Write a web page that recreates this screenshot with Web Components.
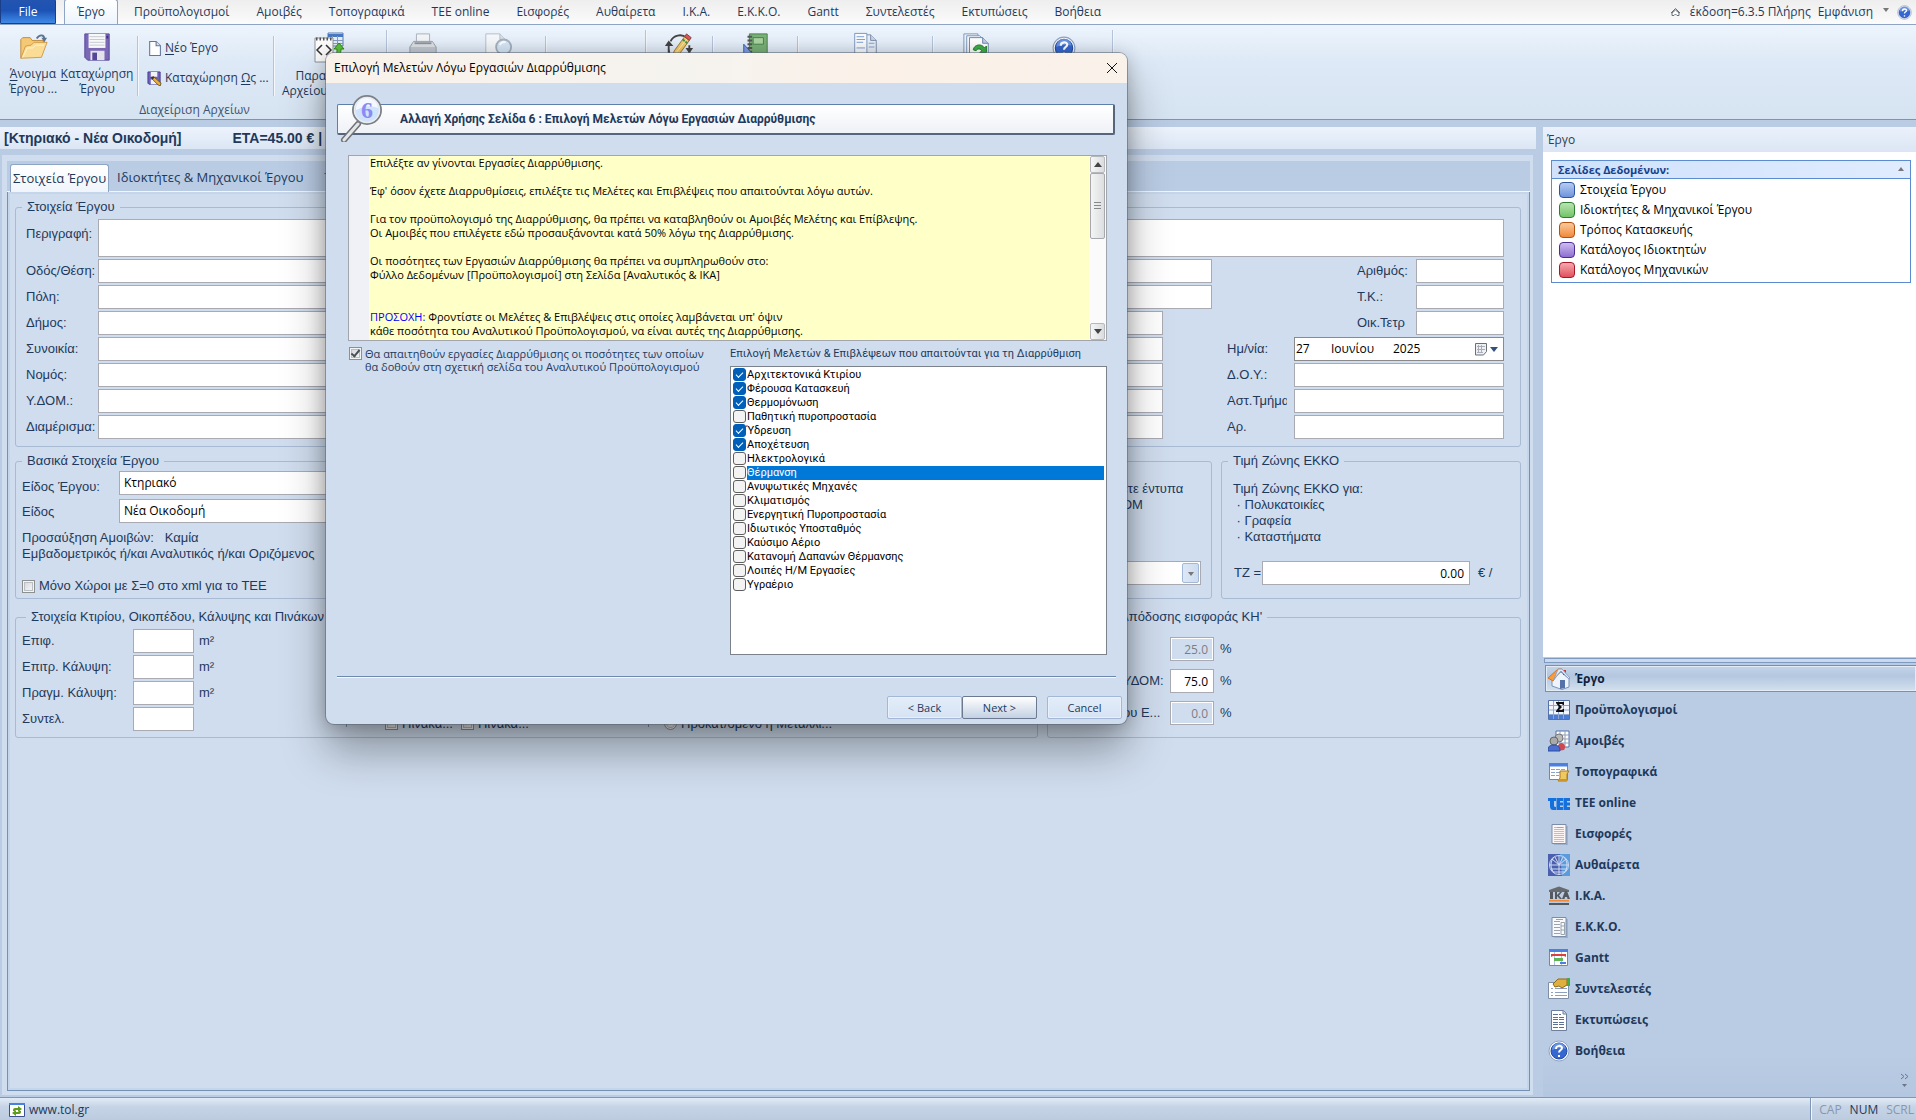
<!DOCTYPE html>
<html lang="el">
<head>
<meta charset="utf-8">
<title>Έργο</title>
<style>
  html, body { height: 100%; margin: 0; }
  body { font: 12px/16px "Open Sans", "Noto Sans", sans-serif; color: #1e395b; background: #bacce4; overflow: hidden; }
</style>
</head>
<body>
<project-app></project-app>
<script>
const BASE = `
  *, *::before, *::after { box-sizing: border-box; }
  :host { display: block; box-sizing: border-box; }
  :host([hidden]) { display: none; }
  button, input, select, textarea { font: inherit; color: inherit; margin: 0; }
  button { background: none; border: 0; padding: 0; }
  a { color: inherit; text-decoration: none; }
  ul { list-style: none; margin: 0; padding: 0; }
  p { margin: 0; }
  .form { font: 13px/16px "Liberation Sans", Arial, sans-serif; }
  .box { height: 24px; border: 1px solid #a9aab2; background: #fff; color: #000; padding: 0 4px; border-radius: 0; outline: 0; font: 12px/16px "Open Sans", sans-serif; min-width: 0; }
  .tick { appearance: none; width: 13px; height: 13px; border: 1px solid #8e8f8f; background: linear-gradient(135deg, #cfd3d8, #fbfbfb); box-shadow: inset 0 0 0 1px #f4f4f4, inset 0 0 0 2px #b9bec5; flex: none; display: grid; place-items: center; }
  .tick:checked::after { content: ""; width: 5px; height: 9px; border: solid #4b5159; border-width: 0 2px 2px 0; transform: translateY(-1px) rotate(40deg); }
`;
function define(name, css, html, setup) {
  const t = document.createElement('template');
  customElements.define(name, class extends HTMLElement {
    connectedCallback() {
      if (this.shadowRoot) return;
      const root = this.attachShadow({ mode: 'open' });
      t.innerHTML = `<style>${BASE}${css}</style>` + (typeof html === 'function' ? html(this) : html);
      root.append(t.content.cloneNode(true));
      if (setup) setup(this, root);
    }
  });
}

const page = (fill, lines) => `<path d="M4 1.500h14v19H4z" fill="${fill}" stroke="#7b8da8"/><path d="M19 3v19H6" fill="none" stroke="#64789a" opacity=".6"/>${lines}`;
const ICONS = {
  folder: [32, `<path d="M3 28V8l2-2h8l2 3h12v5" fill="#f5c873" stroke="#c08a3a"/><path d="M3 28L8 15l6-1 3-3h14l-6 16z" fill="#fbdc94" stroke="#cf9a45"/><path d="M5 27l5-10h6l3-3h9" fill="none" stroke="#fff3cf"/><path d="M20 7c3-5 8-4 8 0" fill="none" stroke="#5b748f" stroke-width="2"/><path d="M25 6h6l-3 5z" fill="#5b748f"/>`],
  save: [32, `<path d="M3 2h26v28H6l-3-3z" fill="#7a68b5" stroke="#56459a"/><path d="M7 2h18v15H7z" fill="#f7f8fa"/><path d="M8 5h16M8 8h16M8 11h16M8 14h16" stroke="#c2c7cf"/><path d="M9 20h15v10H9z" fill="#e3e4ea"/><path d="M11 22h5v8h-5z" fill="#56459a"/><path d="M26 4h2v3h-2z" fill="#3e2f7c"/>`],
  xml: [32, `<path d="M14 1h15v13H14z" fill="#e8eef8" stroke="#5a7db4"/><path d="M14 2h15v3H14z" fill="#4878c0"/><path d="M14 8.500h15M14 11.500h15M18.500 4v10M23.500 4v10" stroke="#7f9bc7"/><path d="M1 6h18v24H1z" fill="#fcfcfc" stroke="#8e9296"/><path d="M2 7h17" stroke="#555" stroke-width="3" stroke-dasharray="1.500 2"/><path d="M8 13l-5 5 5 5M12 13l5 5-5 5" fill="none" stroke="#333" stroke-width="1.500"/><path d="M25 11l5 6h-3c0 5-2 7-6 7 2-2 2-4 2-7h-3z" fill="#5fc437" stroke="#2f8a1e"/>`],
  printer: [32, `<path d="M9 2h14v10H9z" fill="#f2f4f6" stroke="#a8b0ba"/><path d="M2 16l4-6h20l4 6v14H2z" fill="#c3cad3" stroke="#97a0ab"/><path d="M6 11h20l3 5H3z" fill="#dfe3e8"/><path d="M7 12h18" stroke="#8c949e" stroke-width="2"/>`],
  preview: [32, `<path d="M3 2h15l6 6v24H3z" fill="#f5f8fb" stroke="#b3bdca"/><path d="M18 2v6h6" fill="#d8e0ea" stroke="#b3bdca"/><circle cx="22" cy="16" r="8" fill="#d8e8f8" stroke="#a5b1bf" stroke-width="2"/><path d="M18 14c1-3 4-4 6-3" fill="none" stroke="#fff" stroke-width="2"/>`],
  pencil: [32, `<path d="M7 10a11 11 0 0 1 17-4M5 13v9M27 14v9M5 18c0 6 4 10 10 11" fill="none" stroke="#444" stroke-width="2"/><path d="M1 15h9l-5-6zM23 17h8l-4 6z" fill="#444"/><path d="M8 28l3-8L22 5l5 4-11 15z" fill="#f3ca6a" stroke="#9a7427"/><path d="M22 5l2-3 5 4-2 3z" fill="#e0525a" stroke="#7b4640"/><path d="M20 8l5 4" stroke="#47924a" stroke-width="2"/><path d="M13 22L24 8" stroke="#fff0b4"/>`],
  notebook: [32, `<path d="M10 2h19v30H10z" fill="#79b176" stroke="#4a7f4c"/><path d="M14 6h11v7H14z" fill="#a9d3a2" stroke="#4a7f4c"/><path d="M8 5h5M8 9h5M8 13h5M8 17h5M8 21h5" stroke="#555" stroke-width="2"/><path d="M4 13v19h17z" fill="#7f9ee8" stroke="#3857b8"/><path d="M7 22v6h5z" fill="#dce6ff"/>`],
  docs: [32, `<path d="M9 3h13l6 6v23H9z" fill="#e8eef6" stroke="#7b8da8"/><path d="M22 3v6h6" fill="#c6d4e8" stroke="#7b8da8"/><path d="M5 1.500h13v30H5z" fill="#f9fbfd" stroke="#7b96bb"/><path d="M7 5h8M7 8h9M7 11h7M7 17h9M20 12h6M20 16h6" stroke="#7b9dd6"/>`],
  refreshdocs: [32, `<path d="M2 2h15v30H2z" fill="#eef3f9" stroke="#7b96bb"/><path d="M5 4h14l4 4v24H5z" fill="#f4f7fb" stroke="#7b96bb"/><path d="M8 6h14l6 6v20H8z" fill="#fff" stroke="#6b86ac"/><path d="M22 6v6h6" fill="#bfd0e8" stroke="#6b86ac"/><path d="M12 19c1-6 9-7 12-2l2-2v7h-7l2-2c-2-3-5-2-6 0z" fill="#41ae4a" stroke="#197a2a"/>`],
  help: [22, `<circle cx="11" cy="11" r="10" fill="#fff" stroke="#8ea3c4"/><circle cx="11" cy="11" r="8" fill="#3666cf" stroke="#214aa5"/><path d="M4 10a7 7 0 0 1 14-1c-5-2-9-1-14 1z" fill="#8eb0f2" opacity=".6"/><path d="M8 9c0-4 6-4 6-1 0 2-3 2-3 4.500" fill="none" stroke="#fff" stroke-width="2"/><path d="M10 15h2v2h-2z" fill="#fff"/>`],
  newdoc: [14, `<path d="M2.500.5h6l4 4v9h-10z" fill="#fff" stroke="#63779a"/><path d="M8.500.5v4h4" fill="#d6e2f2" stroke="#63779a"/>`],
  saveas: [16, `<path d="M1 1h13v13H2L1 13z" fill="#6d63b8" stroke="#443a90"/><path d="M4 1h7v5H4zM4 9h7v5H4z" fill="#f0f2f8"/><path d="M4 7l3-1 8 7-1 3-2-1z" fill="#e8b040" stroke="#765319"/><path d="M4 7l3-1 1 1-2 2z" fill="#333"/>`],
  home: [22, `<path d="M4 11L13 4l8 7v8l-7 2.500L4 18z" fill="#eef4fc" stroke="#7d93b5"/><path d="M15 2h3v5h-3z" fill="#c43d32"/><path d="M0 10L10 1h4l-9 12z" fill="#f99d3c" stroke="#d9751c"/><path d="M10 1h4l8 9-1 1-8-8-7 8z" fill="#dfe9f7" stroke="#8ca2c4"/><path d="M12 12h5v8l-5 1z" fill="#5572ab"/>`],
  sum: [22, `<path d="M.5 1.500h21v19H.5z" fill="#f3f7fd" stroke="#5572a8"/><path d="M1 15h20v5H1z" fill="#4b7bd2"/><path d="M1 6.500h20M1 11h20M1 15.500h20M5.500 2v18M10.500 2v18M15.500 2v18" stroke="#8fa9d4"/><path d="M8 3h8v3h-1l-1-1h-3l3 3-3 3h3l1-1h1v3H8v-1l3-4-3-4z" fill="#111"/>`],
  people: [22, `<path d="M8 1h13v16H8z" fill="#fff" stroke="#5572a8"/><path d="M8 5h13M8 9h13M8 13h13M12 1v16M17 1v16" stroke="#8fa0ba"/><path d="M9 21c0-6 2-8 5-8 3 1 4 4 2 7z" fill="#d0474f"/><circle cx="11" cy="8" r="4" fill="#b9b9b9" stroke="#777"/><circle cx="6" cy="11" r="4" fill="#a9a9a9" stroke="#666"/><path d="M0 21c0-5 2-6 6-6s6 2 6 6z" fill="#4a6fd0" stroke="#2c4da0"/>`],
  topo: [22, `<path d="M1.500 2.500h18v16h-18z" fill="#fff" stroke="#6d88b5"/><path d="M1 2h19v3.500H1z" fill="#4b7fe0"/><path d="M3 8.500h14M3 11.500h14M3 14.500h8" stroke="#8fa3c8" stroke-dasharray="4 1"/><path d="M12 10h9l-2 3v7h-9l2-3z" fill="#f0c860" stroke="#a97a20"/><path d="M10 18h9v2h-8z" fill="#c9952f"/>`],
  tee: [22, `<path d="M0 6h8v3H6v5q0 1 2 1v3H5q-3 0-3-4V9H0z" fill="#1470dc"/><path d="M8.500 6H15v3h-3v1.500h3v3h-3V15h3v3H8.500zM15.500 6H22v3h-3v1.500h3v3h-3V15h3v3h-6.500z" fill="#1470dc"/>`],
  pink: [22, page('#fdf4f4', '<path d="M6 4.500h10M6 6.500h10M6 8.500h10M6 10.500h10M6 12.500h10M6 14.500h10M6 16.500h10M6 18.500h10" stroke="#f2a9ac"/><path d="M9 4.500h6" stroke="#8fa3e0"/>')],
  globe: [22, `<path d="M0 0h22v22H0z" fill="#4b5fae"/><path d="M12 0h10v22h-8z" fill="#5b9bdc"/><circle cx="11" cy="11" r="9.500" fill="none" stroke="#cfdcf5"/><path d="M11 2v19M2 11h18M11 11L4 5M11 11l7-6M11 11L7 3M11 11l4-8M3 15h16M5 18h12M6 3c-4 5-4 11 0 16M16 3c4 5 4 11 0 16" fill="none" stroke="#cfdcf5"/>`],
  ika: [22, `<path d="M1 5l10-3.500L21 5v2H1z" fill="#676b70"/><path d="M2 7h3v7H2zM7 7h2v3l3-3h2l-3 3.500 3 3.500h-2l-3-3v3H7zM17 6h2l3 8h-2.500l-.5-2h-2l-.5 2H14z" fill="#55595e"/><path d="M1 15h20v1.500H1z" fill="#f08a3a"/><path d="M1 18h20v2H1z" fill="#55595e"/>`],
  ekko: [22, page('#f8f9fa', '<path d="M6 5.500h6M6 8.500h6M6 11.500h6M6 14.500h6M6 17.500h6M8 3.500h7" stroke="#9aa3af"/><path d="M13 6.500h3.500v12H13zM13 10h3M13 14h3" fill="none" stroke="#9aa3af"/>')],
  gantt: [22, `<path d="M1.500 2.500h18v16h-18z" fill="#fff" stroke="#6d88b5"/><path d="M1 2h19v3H1z" fill="#4b7fe0"/><path d="M6.500 5v13M13.500 5v13" stroke="#b0c2e0"/><path d="M3 7h15v3l-2-1H5l-2 1z" fill="#d8433e"/><path d="M6 11h9v3H6z" fill="#62b35a"/><path d="M12 15h6v2h-6z" fill="#4b7fe0"/>`],
  coef: [22, `<path d="M.5 4.500h20v16H.5z" fill="#fff" stroke="#7f8fa8"/><path d="M3 10.500h2M3 14.500h2M3 17.500h2M7 10.500h12M7 14.500h12M7 17.500h12" stroke="#8e9fc0"/><path d="M5 6l5-5h9v6l-5 3-3-2-4 1z" fill="#dfb13c" stroke="#8d6a19"/><path d="M19 0h3v8h-3z" fill="#3fae48"/>`],
  print: [22, `<path d="M3.500 1.500h12l3 3v17h-15z" fill="#fff" stroke="#6d7f9c"/><path d="M15 1.500v3.500h3.500" fill="#cbd7e8" stroke="#6d7f9c"/><path d="M5 5.500h8M5 8.500h12M5 10.500h12M5 13.500h12M5 15.500h12M5 18.500h12" stroke="#5c7295" stroke-dasharray="5 1"/>`],
  web: [16, `<path d="M.5 1.500h15v13H.5z" fill="#fff" stroke="#3d4f8c"/><path d="M0 1h16v2H0z" fill="#4b7fe0"/><path d="M4 9V8q0-2 2-2h3V4l4 3-4 3V8H6v1zM12 9v1q0 2-2 2H7v2l-4-3 4-3v2h3V9z" fill="#5f9a1a"/>`],
  lens: [48, `<path d="M19 30L5 46" stroke="#6f7378" stroke-width="6" stroke-linecap="round"/><path d="M19 30L5 46" stroke="#e4e6e8" stroke-width="3" stroke-linecap="round"/><circle cx="28" cy="16" r="14" fill="#cfe3fb" stroke="#7d8187" stroke-width="2"/><circle cx="28" cy="16" r="12.500" fill="none" stroke="#e9ebee" stroke-width="1.500"/><path d="M17 16a11 11 0 0 1 22-2c-8-3-14-2-22 2z" fill="#f3f9ff"/>`],
};
define('app-icon', `:host{display:inline-block;flex:none;width:var(--s);height:var(--s)} svg{display:block;width:100%;height:100%}`,
  el => { const [v, d] = ICONS[el.getAttribute('name')]; return `<svg viewBox="0 0 ${v} ${v}" aria-hidden="true">${d}</svg>`; },
  el => el.style.setProperty('--s', (el.getAttribute('size') || 22) + 'px'));

/* ---------- Ribbon ---------- */
define('ribbon-tool', `
  :host{width:var(--w);text-align:center;color:#1e395b}
  button{display:flex;flex-direction:column;align-items:center;width:100%;white-space:nowrap;line-height:15px;gap:4px}`,
  `<button type="button"><slot name="icon"></slot><span><slot></slot></span></button>`,
  el => el.style.setProperty('--w', el.getAttribute('w') + 'px'));

define('ribbon-tabs', `
  :host{height:25px;background:linear-gradient(#eee,#fbfbfb);border-bottom:1px solid #8ea4c4;display:flex;align-items:flex-end}
  nav{display:flex;align-items:stretch;height:25px;flex:1;min-width:0}
  nav a{display:flex;align-items:center;padding:0 13px 0 14px;line-height:16px;white-space:nowrap}
  nav .file{width:56px;justify-content:center;padding:0;color:#fff;background:linear-gradient(#2354b0,#1c52b4 45%,#3f8be8);border:1px solid #1b3f87;border-radius:0 2px 0 0;margin-right:8px}
  nav .on{width:54px;padding:0;justify-content:center;background:linear-gradient(#fff,#edf4fd);border:1px solid #8ea4c4;border-bottom:0;border-radius:3px 3px 0 0;margin-right:2px}
  .right{display:flex;align-items:center;gap:7px;height:24px;padding:0 4px 0 0}
  .right svg{margin-right:2px}
  .caret{border:3px solid transparent;border-top:4px solid #777;border-bottom:0;margin:0 1px 4px 3px}`,
  `<nav><a class="file" href="#">File</a><a class="on" href="#">Έργο</a>${['Προϋπολογισμοί','Αμοιβές','Τοπογραφικά','ΤΕΕ online','Εισφορές','Αυθαίρετα','Ι.Κ.Α.','Ε.Κ.Κ.Ο.','Gantt','Συντελεστές','Εκτυπώσεις','Βοήθεια'].map(t => `<a href="#">${t}</a>`).join('')}</nav>
  <div class="right"><svg width="11" height="10" viewBox="0 0 11 10" aria-hidden="true"><path d="M1 6l4.500-4.500L10 6M2 8.500V6l3.500-3L9 6v2.500H7L5.500 7 4 8.500z" fill="#fff" stroke="#68707c"/></svg><span>έκδοση=6.3.5 Πλήρης</span><a href="#">Εμφάνιση</a><i class="caret"></i><app-icon name="help" size="15"></app-icon></div>`);

define('app-ribbon', `
  .body{height:95px;display:flex;background:linear-gradient(#edf4fd,#dde9f6 40%,#d6e3f1);border-bottom:1px solid #7d93b3;padding:5px 0 0 3px}
  .sep{width:1px;height:60px;margin-top:6px;background:#b5c4d9;box-shadow:1px 0 #f4f8fd;flex:none}
  .end{height:80px;margin-top:0}
  .group{display:flex;flex-direction:column;width:383px;flex:none}
  .row{display:flex;height:72px;flex:none}
  .caption{text-align:center;color:#42536e}
  .col{display:flex;flex-direction:column;gap:14px;padding:10px 0 0 9px;width:135px}
  .col button{display:flex;align-items:center;gap:3px;white-space:nowrap;height:16px}
  .gap{flex:none}
  u{text-underline-offset:2px}
  ribbon-tool{flex:none;padding-top:2px}
  .wide{display:block;width:96px;padding-right:52px;text-align:right}
  .low{padding-top:6px}`,
  `<ribbon-tabs></ribbon-tabs>
  <div class="body">
    <div class="group"><div class="row">
      <ribbon-tool w="60"><app-icon slot="icon" name="folder" size="30"></app-icon><u>Ά</u>νοιγμα<br>Έργου ...</ribbon-tool>
      <ribbon-tool w="68"><app-icon slot="icon" name="save" size="30"></app-icon><u>Κ</u>αταχώρηση<br>Έργου</ribbon-tool>
      <i class="gap" style="width:6px"></i><i class="sep"></i>
      <div class="col"><button type="button"><app-icon name="newdoc" size="15"></app-icon><span><u>Ν</u>έο Έργο</span></button><button type="button"><app-icon name="saveas" size="15"></app-icon><span>Καταχώρηση <u>Ω</u>ς ...</span></button></div>
      <i class="sep"></i>
      <ribbon-tool w="112"><app-icon slot="icon" name="xml" size="32"></app-icon><span class="wide">Παρα<br>Αρχείου</span></ribbon-tool>
    </div><div class="caption">Διαχείριση Αρχείων</div></div>
    <i class="sep end"></i>
    <ribbon-tool w="72"><app-icon slot="icon" name="printer" size="30"></app-icon></ribbon-tool>
    <ribbon-tool w="78"><app-icon slot="icon" name="preview" size="30"></app-icon></ribbon-tool>
    <i class="gap" style="width:8px"></i><i class="sep"></i><i class="gap" style="width:99px"></i><i class="sep end"></i>
    <ribbon-tool w="66"><app-icon slot="icon" name="pencil" size="30"></app-icon></ribbon-tool><i class="sep"></i>
    <ribbon-tool w="84"><app-icon slot="icon" name="notebook" size="30"></app-icon></ribbon-tool><i class="sep"></i>
    <ribbon-tool w="134"><app-icon slot="icon" name="docs" size="30"></app-icon></ribbon-tool><i class="sep"></i>
    <ribbon-tool w="88"><app-icon slot="icon" name="refreshdocs" size="30"></app-icon></ribbon-tool>
    <ribbon-tool class="low" w="86"><app-icon slot="icon" name="help" size="24"></app-icon></ribbon-tool>
    <i class="gap" style="width:5px"></i><i class="sep end"></i>
  </div>`);

/* ---------- Form pieces ---------- */
define('group-box', `
  fieldset{border:1px solid #a9bad3;border-radius:3px;margin:0;min-width:0;height:100%;padding:var(--pad,4px 16px 6px 6px)}
  legend{padding:0 5px;margin-left:var(--in,0px);height:16px;white-space:nowrap}`,
  el => `<fieldset class="form"><legend>${el.getAttribute('legend')}</legend><slot></slot></fieldset>`);

define('form-field', `
  :host{display:flex;align-items:center;min-width:0;flex:var(--flex,1)}
  label{width:var(--lw,72px);margin-right:var(--lg,0px);flex:none;white-space:nowrap;overflow:hidden}
  .box{flex:1;width:0}
  .big{height:38px;resize:none;display:block}
  :host([tall]){align-items:flex-start} :host([tall]) label{padding-top:7px}
  .num{text-align:right;padding-right:5px}
  .num:disabled{background:#d0ddee;color:#7d7d84;box-shadow:inset 0 0 0 1px #fff}
  .unit{margin-left:var(--ug,6px);width:var(--uw,12px);white-space:nowrap}`,
  el => { const a = n => el.getAttribute(n) || '';
    return `<label class="form" for="f">${a('label')}</label>${el.hasAttribute('tall') ? '<textarea id="f" class="box big"></textarea>' : `<input id="f" type="text" class="box ${a('value') ? 'num' : ''}" value="${a('value')}" ${el.hasAttribute('off') ? 'disabled' : ''}>`}${a('unit') ? `<span class="form unit">${a('unit')}</span>` : ''}`; });

define('date-field', `
  :host{display:flex;align-items:center;flex:none}
  label{width:67px}
  .wrap{display:flex;flex:1;align-items:center;padding:0 5px 0 1px;border-color:#8a8a8a}
  input{border:0;background:none;padding:0;outline:0}
  button{display:flex;align-items:center;gap:3px;margin-left:auto}`,
  `<label class="form" for="d">Ημ/νία:</label><div class="box wrap"><input id="d" style="width:35px" value="27"><input aria-label="Μήνας" style="width:62px" value="Ιουνίου"><input aria-label="Έτος" style="width:36px" value="2025"><button type="button" aria-label="Ημερολόγιο"><svg width="12" height="13" viewBox="0 0 12 13"><path d="M.5.5h11v8l-3 3.500h-8z" fill="#eef0f4" stroke="#6b6f76"/><path d="M2 3.500h8M2 6.500h8M2 9.500h6M3.500 2v8M6.500 2v8" stroke="#a9aeb8"/></svg><svg width="8" height="5" viewBox="0 0 8 5"><path d="M0 0h8L4 5z" fill="#31507c"/></svg></button></div>`);

define('project-form', `
  :host{display:flex;flex-direction:column;padding:7px 8px 0 7px;gap:6px}
  .g1{--pad:4px 16px 7px 10px;--in:-4px} .g1 .r+.r{margin-top:2px}
  .r{display:flex}
  .a{gap:145px} .b{gap:194px} .c{gap:64px}
  .s{--flex:none;--lw:59px;width:147px} .m{--flex:none;width:277px;--lw:60px;--lg:7px}
  .two{display:flex;gap:9px} .three{display:flex;gap:9px;margin-top:4px}
  .grow{flex:1;min-width:0}
  .g2{--pad:2px 10px 4px 6px} .g3{width:300px;--pad:12px 6px 0 11px;--in:-5px}
  .split{display:flex;justify-content:space-between}
  .pick{display:flex;align-items:center;height:24px} .pick+.pick{margin-top:4px} .pick label{width:97px;padding-top:8px} .pick+.pick label{padding-top:2px}
  select{appearance:none;width:480px}
  .lines{padding-top:7px;white-space:pre;height:39px}
  .check{display:flex;align-items:center;gap:4px;margin-top:16px}
  .rt{padding-top:10px;width:79px;white-space:pre;height:114px;display:flex;flex-direction:column;justify-content:space-between}
  .combo{margin-left:-200px;display:flex;position:relative} .combo select{width:279px}
  .combo::after{content:"";position:absolute;right:2px;top:2px;width:17px;height:20px;border:1px solid #a3b8d6;border-radius:2px;background:linear-gradient(90deg,#dce8f6,#cddcf0);pointer-events:none}
  .combo::before{content:"";position:absolute;right:7px;top:11px;border:3px solid transparent;border-top:4px solid #777;border-bottom:0;z-index:1}
  .tz{--lw:28px;--ug:8px;--uw:18px;margin-top:16px;margin-left:1px;width:262px}
  .tz-note{white-space:pre}
  .g4{--pad:4px 6px 6px 6px;--in:4px} .stack{display:flex;flex-direction:column;gap:2px}
  .k{--lw:111px;--flex:none;width:193px;--ug:5px;--uw:16px}
  .k.short{width:172px}
  .g4 .cols{display:flex;height:102px}
  .left{width:324px}
  .mid,.rad{height:98px;border-left:1px solid #7f94b4;display:flex;align-items:flex-end;white-space:nowrap}
  .mid{width:302px;padding-left:38px;gap:8px} .rad{padding-left:15px}
  .o{display:flex;align-items:center;gap:4px;height:17px;margin-bottom:-5px}
  .o input[type=radio]{border-radius:50%}
  .g5{width:474px;--pad:12px 6px 6px 6px;--in:61px}
  .g5 .stack{gap:8px;padding-left:69px} .p{--lw:47px;--flex:none;width:109px;--ug:6px}
  `,
  `<group-box class="g1" legend="Στοιχεία Έργου">
     <div class="r"><form-field tall label="Περιγραφή:"></form-field></div>
     <div class="r a"><form-field label="Οδός/Θέση:"></form-field><form-field class="s" label="Αριθμός:"></form-field></div>
     <div class="r a"><form-field label="Πόλη:"></form-field><form-field class="s" label="Τ.Κ.:"></form-field></div>
     <div class="r b"><form-field label="Δήμος:"></form-field><form-field class="s" label="Οικ.Τετρ"></form-field></div>
     <div class="r c"><form-field label="Συνοικία:"></form-field><date-field class="m"></date-field></div>
     <div class="r c"><form-field label="Νομός:"></form-field><form-field class="m" label="Δ.Ο.Υ.:"></form-field></div>
     <div class="r c"><form-field label="Υ.ΔΟΜ.:"></form-field><form-field class="m" label="Αστ.Τμήμα"></form-field></div>
     <div class="r c"><form-field label="Διαμέρισμα:"></form-field><form-field class="m" label="Αρ."></form-field></div>
   </group-box>
   <div class="two">
     <group-box class="g2 grow" legend="Βασικά Στοιχεία Έργου"><div class="split"><div>
       <div class="pick"><label for="k1">Είδος Έργου:</label><select id="k1" class="box"><option>Κτηριακό</option></select></div>
       <div class="pick"><label for="k2">Είδος</label><select id="k2" class="box"><option>Νέα Οικοδομή</option></select></div>
       <p class="lines">Προσαύξηση Αμοιβών:   Καμία
Εμβαδομετρικός ή/και Αναλυτικός ή/και Οριζόμενος</p>
       <label class="check"><input type="checkbox" class="tick">Μόνο Χώροι με Σ=0 στο xml για το ΤΕΕ</label></div>
       <div class="rt"><p>ετε έντυπα
ΟΜ</p><div class="combo"><select class="box" aria-label="Έντυπα"><option></option></select></div></div></div>
     </group-box>
     <group-box class="g3" legend="Τιμή Ζώνης ΕΚΚΟ"><div class="tz-note">Τιμή Ζώνης ΕΚΚΟ για:
 · Πολυκατοικίες
 · Γραφεία
 · Καταστήματα</div><form-field class="tz" label="ΤΖ =" value="0.00" unit="€ /"></form-field></group-box>
   </div>
   <div class="three">
     <group-box class="g4 grow" legend="Στοιχεία Κτιρίου, Οικοπέδου, Κάλυψης και Πινάκων"><div class="cols">
       <div class="left stack"><form-field class="k" label="Επιφ." unit="m²"></form-field><form-field class="k" label="Επιτρ. Κάλυψη:" unit="m²"></form-field><form-field class="k" label="Πραγμ. Κάλυψη:" unit="m²"></form-field><form-field class="k short" label="Συντελ."></form-field></div>
       <div class="mid"><label class="o"><input type="checkbox" class="tick">Πίνακα...</label><label class="o"><input type="checkbox" class="tick">Πίνακα...</label></div>
       <div class="rad"><label class="o"><input type="radio" class="tick">Προκατ/όμενο ή Μεταλλι...</label></div>
     </div></group-box>
     <group-box class="g5" legend="Απόδοσης εισφοράς ΚΗ'"><div class="stack"><form-field class="p" off value="25.0" unit="%"></form-field><form-field class="p" label="ΥΔΟΜ:" value="75.0" unit="%"></form-field><form-field class="p" off label="ου Ε..." value="0.0" unit="%"></form-field></div></group-box>
   </div>`);

define('work-panel', `
  :host{display:flex;flex-direction:column;background:#d0ddee;padding:6px 3px 4px 5px}
  .tabs{display:flex;height:31px;flex:none;background:#bacce4;padding:3px 0 0 3px;border-bottom:1px solid #f3f7fc;font:13px/16px "Open Sans",sans-serif}
  .tabs a{display:flex;align-items:center;padding:0 0 2px 8px;white-space:nowrap;height:28px}
  .tabs a.on{background:linear-gradient(#fff,#f0f5fc);border:1px solid #8ea4c4;border-bottom:0;border-radius:3px 3px 0 0;width:99px;justify-content:center;padding:0 0 2px}
  .tabs a+a+a{margin-left:13px}
  .page{flex:1;border:1px solid #7390b5;border-top:0;box-shadow:inset 0 0 0 2px #c6d6ea}`,
  `<nav class="tabs"><a class="on" href="#">Στοιχεία Έργου</a><a href="#">Ιδιοκτήτες &amp; Μηχανικοί Έργου</a><a href="#">Τ</a></nav><div class="page"><slot></slot></div>`);

/* ---------- Side pane ---------- */
define('page-list', `
  :host{border:1px solid #5b8bd0;background:#fff;color:#000}
  h2{margin:0;font:bold 11px/18px "Open Sans",sans-serif;height:18px;padding:0 6px;color:#15428b;background:linear-gradient(90deg,#cfe1fb,#e0ecff);border-bottom:1px solid #5b8bd0;display:flex;justify-content:space-between}
  h2 i{border:3px solid transparent;border-bottom:4px solid #777;border-top:0;margin-top:6px;height:0}
  li a{display:flex;align-items:center;gap:5px;height:20px;padding-left:7px}
  ul{padding:1px 0 2px}
  i.sw{width:16px;height:16px;border:1px solid;border-radius:4px}`,
  `<h2>Σελίδες Δεδομένων:<i></i></h2><ul>${[['Στοιχεία Έργου','#2f55a0','#b7cbf2,#6d95dc'],['Ιδιοκτήτες &amp; Μηχανικοί Έργου','#2f7d32','#b9e4b0,#74c468'],['Τρόπος Κατασκευής','#b1500f','#fbc99a,#f08a3c'],['Κατάλογος Ιδιοκτητών','#4b2d94','#cdbcf0,#8d6fd0'],['Κατάλογος Μηχανικών','#a5182a','#f7a9ae,#e2505c']].map(([t, b, g]) => `<li><a href="#"><i class="sw" style="border-color:${b};background:linear-gradient(${g})"></i>${t}</a></li>`).join('')}</ul>`);

define('nav-list', `
  :host{display:flex;flex-direction:column;flex:none;padding:1px 0 0 1px;height:440px;background:linear-gradient(#bacce4 90%,#b4c7e0)}
  .split{height:5px;border:1px solid #7f9ac0;background:#c9d9ee;border-right:0}
  ul{padding:2px 0 0 1px}
  li{height:31px}
  a{display:flex;align-items:center;gap:5px;height:27px;padding:0 0 0 2px;font:bold 12px/16px "Open Sans",sans-serif;border:1px solid transparent;border-right:0}
  .on{border-color:#7390b5;background:linear-gradient(#c4d4ea,#b4c7e0 40%,#d3e0ee);color:#0b1f3d;box-shadow:inset 0 0 0 1px #e3ecf6}
  .more{margin-top:auto;align-self:flex-end;padding:0 6px 4px 0;display:block}`,
  `<div class="split"></div><ul>${[['home','Έργο'],['sum','Προϋπολογισμοί'],['people','Αμοιβές'],['topo','Τοπογραφικά'],['tee','ΤΕΕ online'],['pink','Εισφορές'],['globe','Αυθαίρετα'],['ika','Ι.Κ.Α.'],['ekko','Ε.Κ.Κ.Ο.'],['gantt','Gantt'],['coef','Συντελεστές'],['print','Εκτυπώσεις'],['help','Βοήθεια']].map(([i, t], n) => `<li><a href="#" class="${n ? '' : 'on'}"><app-icon name="${i}"></app-icon>${t}</a></li>`).join('')}</ul>
  <button class="more" type="button" aria-label="Περισσότερα"><svg width="10" height="16" viewBox="0 0 10 16"><path d="M1 1l3 2.500L1 6M5 1l3 2.500L5 6" fill="none" stroke="#6b7686"/><path d="M2 11h5l-2.500 3z" fill="#6b7686"/></svg></button>`);

define('side-pane', `
  :host{display:flex;flex-direction:column;width:373px;flex:none}
  h1{margin:0;font:12px/16px "Open Sans",sans-serif;height:25px;padding:5px 4px;background:linear-gradient(#eaf1fb,#dbe6f4);color:#333c4a}
  .white{background:#fff;flex:1;padding:8px 5px 0 8px}`,
  `<h1>Έργο</h1><div class="white"><page-list></page-list></div><nav-list></nav-list>`);

define('status-bar', `
  :host{display:flex;align-items:center;height:23px;flex:none;border-top:1px solid #7f96b8;background:linear-gradient(#e1ebf6,#c6d4e6 40%,#bccbdf);padding:2px 0 0 9px;gap:4px}
  .keys{margin:-2px 0 0 auto;display:flex;gap:8px;align-self:stretch;align-items:center;border-left:1px solid #7f96b8;box-shadow:inset 1px 0 #f1f6fb;padding:2px 2px 0 8px;color:#8997ad}
  b{font-weight:normal;color:#1e395b}`,
  `<app-icon name="web" size="16"></app-icon><a href="#">www.tol.gr</a><div class="keys"><span>CAP</span><b>NUM</b><span>SCRL</span></div>`);

/* ---------- Wizard window ---------- */
define('check-list', `
  :host{border:1px solid #7c828c;background:#fff;height:289px;padding:1px 2px;color:#000;font-family:Roboto,"Open Sans",sans-serif}
  li{display:flex;height:14px}
  input{appearance:none;width:13px;height:13px;border:1px solid #5f5f5f;border-radius:3px;background:#f3f3f3;flex:none;display:grid;place-items:center}
  input:checked{background:#005fb8;border-color:#005fb8}
  input:checked::after{content:"";width:7px;height:4px;border:solid #fff;border-width:0 0 1px 1px;transform:translateY(-1px) rotate(-45deg)}
  label{flex:1;line-height:14px;margin-left:1px;white-space:nowrap}
  .on label{background:#0078d7;color:#fff}`,
  `<ul>${['+Αρχιτεκτονικά Κτιρίου','+Φέρουσα Κατασκευή','+Θερμομόνωση','Παθητική πυροπροστασία','+Ύδρευση','+Αποχέτευση','Ηλεκτρολογικά','Θέρμανση','Ανυψωτικές Μηχανές','Κλιματισμός','Ενεργητική Πυροπροστασία','Ιδιωτικός Υποσταθμός','Καύσιμο Αέριο','Κατανομή Δαπανών Θέρμανσης','Λοιπές Η/Μ Εργασίες','Υγραέριο'].map((t, i) => `<li class="${i === 7 ? 'on' : ''}"><input type="checkbox" id="c${i}" ${t[0] === '+' ? 'checked' : ''}><label for="c${i}">${t.replace('+', '')}</label></li>`).join('')}</ul>`);

define('scroll-text', `
  :host{display:flex;height:186px;border:1px solid #a3a5ad;background:#ffffc8;color:#000;overflow:hidden}
  .gutter{width:20px;background:#f0f1f6;flex:none}
  .t{flex:1;white-space:pre;line-height:14px;padding:0 0 0 1px;overflow:hidden}
  b{font-weight:normal;color:#00f}
  .bar{width:17px;background:#fbfbfb;flex:none;display:flex;flex-direction:column;align-items:stretch;padding:0 1px}
  .bar button{height:17px;border:1px solid #b5b8bd;background:linear-gradient(90deg,#f6f6f6,#dadcdf);border-radius:2px;display:grid;place-items:center}
  .thumb{height:66px;border:1px solid #a5a8ad;border-radius:2px;background:linear-gradient(90deg,#f4f4f4,#dcdee0);display:grid;place-items:center}
  .bar button:last-child{margin-top:auto}`,
  `<div class="gutter"></div><div class="t">Επιλέξτε αν γίνονται Εργασίες Διαρρύθμισης.

Έφ' όσον έχετε Διαρρυθμίσεις, επιλέξτε τις Μελέτες και Επιβλέψεις που απαιτούνται λόγω αυτών.

Για τον προϋπολογισμό της Διαρρύθμισης, θα πρέπει να καταβληθούν οι Αμοιβές Μελέτης και Επίβλεψης.
Οι Αμοιβές που επιλέγετε εδώ προσαυξάνονται κατά 50% λόγω της Διαρρύθμισης.

Οι ποσότητες των Εργασιών Διαρρύθμισης θα πρέπει να συμπληρωθούν στο:
Φύλλο Δεδομένων [Προϋπολογισμοί] στη Σελίδα [Αναλυτικός &amp; ΙΚΑ]


<b>ΠΡΟΣΟΧΗ:</b> Φροντίστε οι Μελέτες &amp; Επιβλέψεις στις οποίες λαμβάνεται υπ' όψιν
κάθε ποσότητα του Αναλυτικού Προϋπολογισμού, να είναι αυτές της Διαρρύθμισης.</div>
  <div class="bar"><button type="button" aria-label="Πάνω"><svg width="8" height="5"><path d="M0 5h8L4 0z" fill="#444"/></svg></button><div class="thumb"><svg width="7" height="8"><path d="M0 .5h7M0 3.500h7M0 6.500h7" stroke="#888"/></svg></div><button type="button" aria-label="Κάτω"><svg width="8" height="5"><path d="M0 0h8L4 5z" fill="#444"/></svg></button></div>`);

define('wizard-window', `
  :host{position:absolute;left:326px;top:53px;width:801px;height:671px;display:flex;flex-direction:column;background:#d0ddee;border-radius:8px;overflow:visible;font-size:11px;
    box-shadow:0 0 0 1px rgba(90,100,115,.55),0 2px 18px rgba(0,0,0,.24),0 26px 44px rgba(0,0,0,.34)}
  header{height:30px;flex:none;display:flex;align-items:center;justify-content:space-between;padding:0 9px 0 8px;border-radius:8px 8px 0 0;background:linear-gradient(90deg,#f9f2ea,#f5f3ef 45%,#fbf1e8 70%,#f9f2ea);color:#000}
  header h2{margin:0;font-weight:normal;font-size:12px}
  .banner{margin:21px 12px 0 11px;height:31px;flex:none;display:flex;align-items:center;border:1px solid #5d7fab;border-right:2px solid #56657c;border-bottom:2px solid #56657c;border-radius:2px;background:linear-gradient(#fff,#eef1f6);padding-left:62px;color:#1e395b;position:relative}
  .banner h3{margin:0;font:bold 12px/16px Roboto,"Open Sans",sans-serif}
  .lens{position:absolute;left:1px;top:-11px;width:48px;height:48px}
  .lens span{position:absolute;left:17px;top:4px;width:22px;text-align:center;font:bold 24px/24px "Liberation Serif",serif;color:#8a8cf5}
  scroll-text{margin:20px 20px 0 22px;flex:none}
  .cols{display:flex;margin:6px 20px 0 23px;flex:none}
  .opt{display:flex;gap:3px;width:381px;flex:none;line-height:13px}
  .pick{flex:1}
  .pick p{line-height:13px;height:19px;font-family:Roboto,"Open Sans",sans-serif}
  .fill{flex:1}
  hr{margin:0 11px;border:0;border-top:1px solid #6d87ad;border-bottom:1px solid #f5f8fc;flex:none;width:auto}
  footer{display:flex;justify-content:flex-end;margin:18px 5px 5px 0;flex:none}
  footer button{width:75px;height:23px;border:1px solid #a3b8d6;border-radius:2px;background:linear-gradient(#e3edf9,#d6e3f3);color:#1e395b;box-shadow:inset 0 0 0 1px #e8f1fb}
  footer .main{border-color:#6b7a90;background:linear-gradient(#fff,#c3d1e3);box-shadow:none}
  footer .last{margin-left:10px}`,
  `<header><h2>Επιλογή Μελετών Λόγω Εργασιών Διαρρύθμισης</h2><button type="button" aria-label="Κλείσιμο"><svg width="12" height="12" viewBox="0 0 12 12" style="display:block"><path d="M1 1l10 10M11 1L1 11" stroke="#111" stroke-width="1"/></svg></button></header>
  <div class="banner"><div class="lens"><app-icon name="lens" size="48"></app-icon><span>6</span></div><h3>Αλλαγή Χρήσης Σελίδα 6 : Επιλογή Μελετών Λόγω Εργασιών Διαρρύθμισης</h3></div>
  <scroll-text></scroll-text>
  <div class="cols"><label class="opt"><input type="checkbox" class="tick" checked><span>Θα απαιτηθούν εργασίες Διαρρύθμισης οι ποσότητες των οποίων<br>θα δοθούν στη σχετική σελίδα του Αναλυτικού Προϋπολογισμού</span></label>
  <div class="pick"><p>Επιλογή Μελετών &amp; Επιβλέψεων που απαιτούνται για τη Διαρρύθμιση</p><check-list></check-list></div></div>
  <div class="fill"></div><hr>
  <footer><button type="button">&lt; Back</button><button type="button" class="main">Next &gt;</button><button type="button" class="last">Cancel</button></footer>`);

define('project-app', `
  :host{height:100vh;display:flex;flex-direction:column;position:relative}
  .mid{flex:1;display:flex;gap:7px;padding-top:7px;min-height:0}
  .main{flex:1;min-width:0;display:flex;flex-direction:column}
  .info{height:22px;flex:none;background:linear-gradient(#edf3fc,#dbe6f4);font:bold 14px/16px "Liberation Sans",Arial,sans-serif;padding:3px 4px;display:flex;gap:51px;white-space:pre}
  work-panel{flex:1;margin:6px 3px 2px 2px;min-height:0}`,
  `<app-ribbon></app-ribbon><div class="mid"><div class="main"><div class="info"><span>[Κτηριακό - Νέα Οικοδομή]</span><span>ΕΤΑ=45.00 € |</span></div><work-panel><project-form></project-form></work-panel></div><side-pane></side-pane></div><status-bar></status-bar><wizard-window></wizard-window>`);
</script>
</body>
</html>
